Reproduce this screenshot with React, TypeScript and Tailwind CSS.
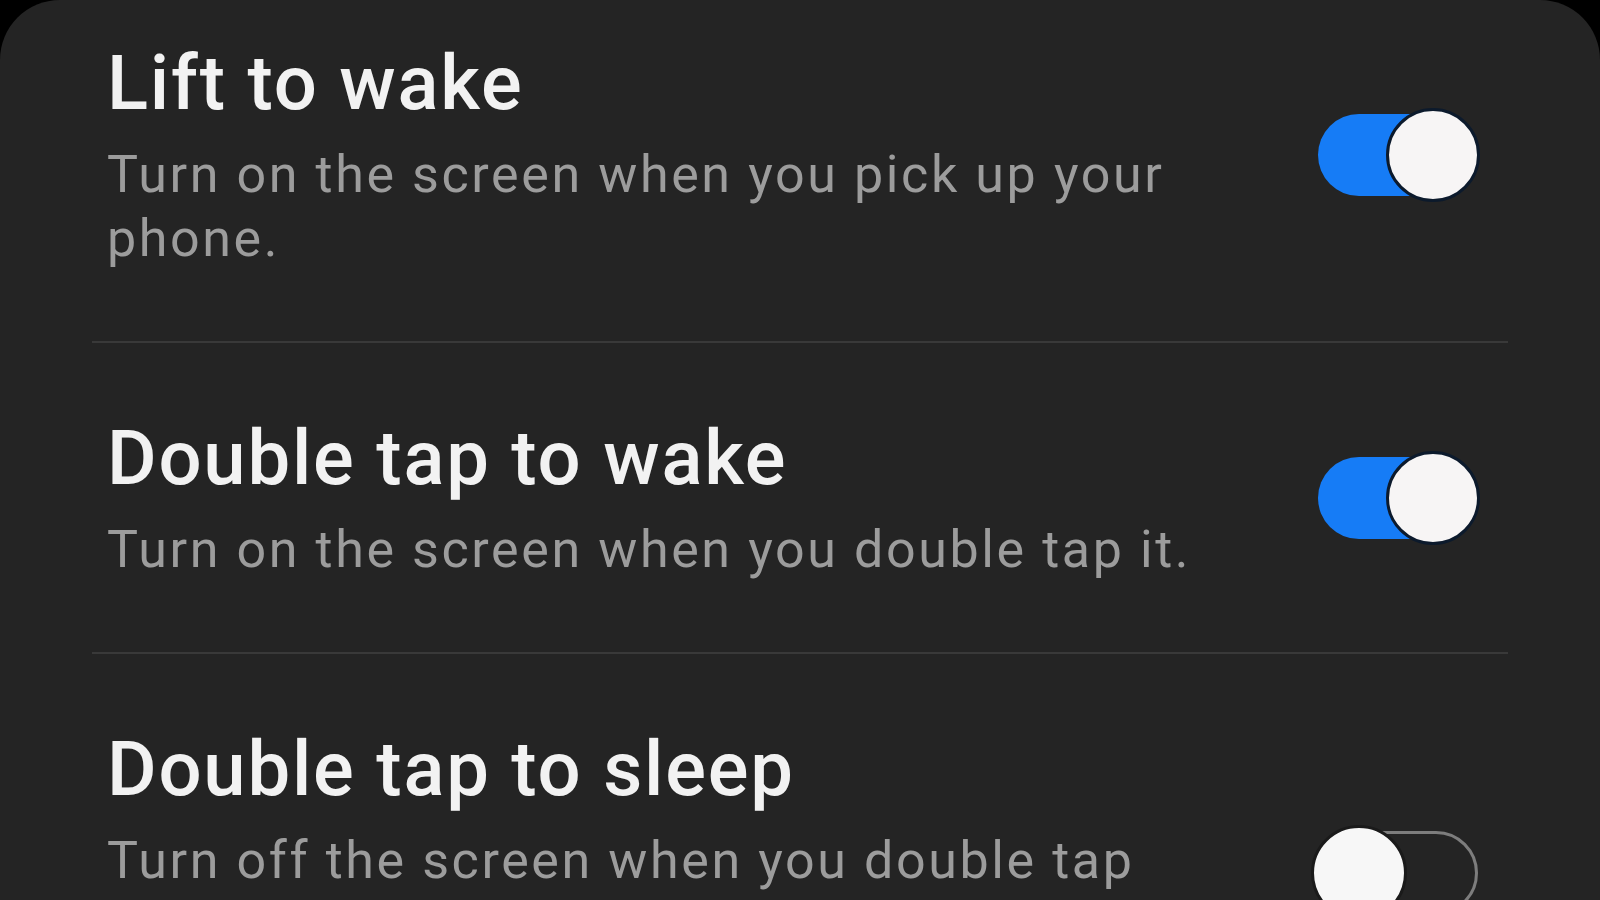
import React from "react";

type Item = { title: string; desc: string; on: boolean; first?: boolean };

const items: Item[] = [
  { title: "Lift to wake", desc: "Turn on the screen when you pick up your phone.", on: true, first: true },
  { title: "Double tap to wake", desc: "Turn on the screen when you double tap it.", on: true },
  {
    title: "Double tap to sleep",
    desc: "Turn off the screen when you double tap an empty area of the Home screen or Lock screen.",
    on: false,
  },
];

function Toggle({ on }: { on: boolean }) {
  if (on) {
    return (
      <div className="relative h-[82px] w-[160px] shrink-0 rounded-full bg-[#167cf6]">
        <div className="absolute left-[68px] top-[-6px] h-[94px] w-[94px] rounded-full border-[3px] border-[#0c1a2c] bg-[#f7f5f5]" />
      </div>
    );
  }
  return (
    <div className="relative h-[84px] w-[164px] shrink-0 rounded-full border-[3px] border-[#7d7d7d]">
      <div className="absolute left-[-6px] top-[-9px] h-[96px] w-[96px] rounded-full border-[3px] border-[#1a1a1a] bg-[#f7f7f7]" />
    </div>
  );
}

function Row({ item }: { item: Item }) {
  return (
    <div
      className={`flex items-center justify-between pl-[15px] pr-[30px] ${
        item.first ? "pt-[38px] pb-[70px]" : "pt-[70px] pb-[70px]"
      }`}
    >
      <div className="w-[1100px]">
        <div className="text-[76px] leading-[91px] font-medium tracking-[1.8px] text-[#f2f2f2]">{item.title}</div>
        <div className="mt-[14px] text-[52px] leading-[64px] tracking-[2.6px] text-[#9c9c9c]">{item.desc}</div>
      </div>
      <Toggle on={item.on} />
    </div>
  );
}

export default function App() {
  return (
    <div className="h-[900px] w-[1600px] overflow-hidden bg-black" style={{ fontFamily: "Roboto, 'Noto Sans', sans-serif" }}>
      <div className="h-full w-full rounded-t-[60px] bg-[#242424] px-[92px]">
        {items.map((it, i) => (
          <React.Fragment key={it.title}>
            {i > 0 && <div className="h-[2px] bg-[#393939]" />}
            <Row item={it} />
          </React.Fragment>
        ))}
      </div>
    </div>
  );
}
